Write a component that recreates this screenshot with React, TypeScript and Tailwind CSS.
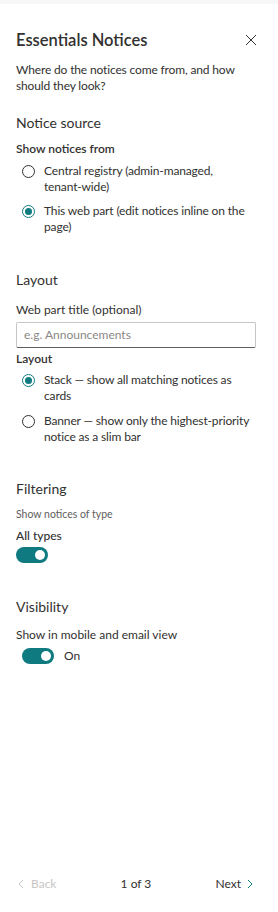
import React from "react";

const font = { fontFamily: '"Segoe UI", Lato, "Noto Sans", sans-serif' };

function Radio({ checked, lines }: { checked?: boolean; lines: string[] }) {
  return (
    <div className="flex items-start gap-[9px] pl-[6px]">
      <span
        className={
          checked
            ? "mt-[2px] flex h-[13px] w-[13px] shrink-0 items-center justify-center rounded-full border border-[#0f7b80]"
            : "mt-[2px] flex h-[13px] w-[13px] shrink-0 items-center justify-center rounded-full border border-[#323130]"
        }
      >
        {checked && <span className="h-[7px] w-[7px] rounded-full bg-[#0f7b80]" />}
      </span>
      <div className="text-[12px] leading-[16px] tracking-[-0.15px] text-[#323130]">
        {lines.map((l) => (
          <div key={l} className="whitespace-nowrap">
            {l}
          </div>
        ))}
      </div>
    </div>
  );
}

function Toggle() {
  return (
    <span className="flex h-[16px] w-[32px] items-center justify-end rounded-full bg-[#0f7b80] pr-[3px]">
      <span className="h-[10px] w-[10px] rounded-full bg-white" />
    </span>
  );
}

export default function App() {
  return (
    <div style={font} className="flex h-[912px] w-[278px] flex-col bg-white text-[#323130]">
      <div className="h-[4px] bg-[#f7f7f7]" />

      <div className="pl-4 pr-[22px]">
        {/* HEADER */}
        <div className="mt-[24px] flex items-center justify-between">
          <h1 className="text-[16.5px] font-semibold leading-[24px]">Essentials Notices</h1>
          <svg width="12" height="12" viewBox="0 0 12 12" className="mr-[-1px]">
            <path d="M1 1 L11 11 M11 1 L1 11" stroke="#323130" strokeWidth="1" />
          </svg>
        </div>
        <p className="mt-[10px] text-[12px] leading-[16px] tracking-[-0.15px]">
          <span className="block whitespace-nowrap">Where do the notices come from, and how</span>
          <span className="block whitespace-nowrap">should they look?</span>
        </p>

        {/* NOTICE SOURCE */}
        <h2 className="mt-[19px] text-[14px] leading-[20px]">Notice source</h2>
        <div className="mt-[8px] text-[12px] font-semibold leading-[16px]">Show notices from</div>
        <div className="mt-[6px] flex flex-col gap-[8px]">
          <Radio lines={["Central registry (admin-managed,", "tenant-wide)"]} />
          <Radio checked lines={["This web part (edit notices inline on the", "page)"]} />
        </div>

        {/* LAYOUT */}
        <h2 className="mt-[35px] text-[14px] leading-[20px]">Layout</h2>
        <div className="mt-[12px] text-[12px] leading-[16px]">Web part title (optional)</div>
        <div className="mt-[4px] flex h-[26px] items-center rounded-[2px] border border-[#c8c6c4] border-b-[#605e5c] px-[7px] text-[12px] text-[#8a8886]">
          e.g. Announcements
        </div>
        <div className="mt-[3px] text-[12px] font-semibold leading-[16px]">Layout</div>
        <div className="mt-[5px] flex flex-col gap-[9px]">
          <Radio checked lines={["Stack — show all matching notices as", "cards"]} />
          <Radio lines={["Banner — show only the highest-priority", "notice as a slim bar"]} />
        </div>

        {/* FILTERING */}
        <h2 className="mt-[34px] text-[14px] leading-[20px]">Filtering</h2>
        <div className="mt-[8px] text-[10.5px] leading-[14px] text-[#605e5c]">Show notices of type</div>
        <div className="mt-[7px] text-[12px] font-medium leading-[16px]">All types</div>
        <div className="mt-[3px]">
          <Toggle />
        </div>

        {/* VISIBILITY */}
        <h2 className="mt-[34px] text-[14px] leading-[20px]">Visibility</h2>
        <div className="mt-[10px] text-[12px] leading-[16px]">Show in mobile and email view</div>
        <div className="mt-[5px] flex items-center gap-[10px] pl-[6px]">
          <Toggle />
          <span className="text-[12px] leading-[16px]">On</span>
        </div>
      </div>

      {/* FOOTER */}
      <div className="mt-auto mb-[20px] flex items-center justify-between pl-[18px] pr-[25px] text-[12px] leading-[16px]">
        <div className="flex items-center gap-[7px] text-[#c8c6c4]">
          <svg width="6" height="10" viewBox="0 0 6 10">
            <path d="M5 1 L1 5 L5 9" fill="none" stroke="#c8c6c4" strokeWidth="1" />
          </svg>
          <span>Back</span>
        </div>
        <span>1 of 3</span>
        <div className="flex items-center gap-[6px]">
          <span>Next</span>
          <svg width="6" height="10" viewBox="0 0 6 10">
            <path d="M1 1 L5 5 L1 9" fill="none" stroke="#0f7b80" strokeWidth="1" />
          </svg>
        </div>
      </div>
    </div>
  );
}
